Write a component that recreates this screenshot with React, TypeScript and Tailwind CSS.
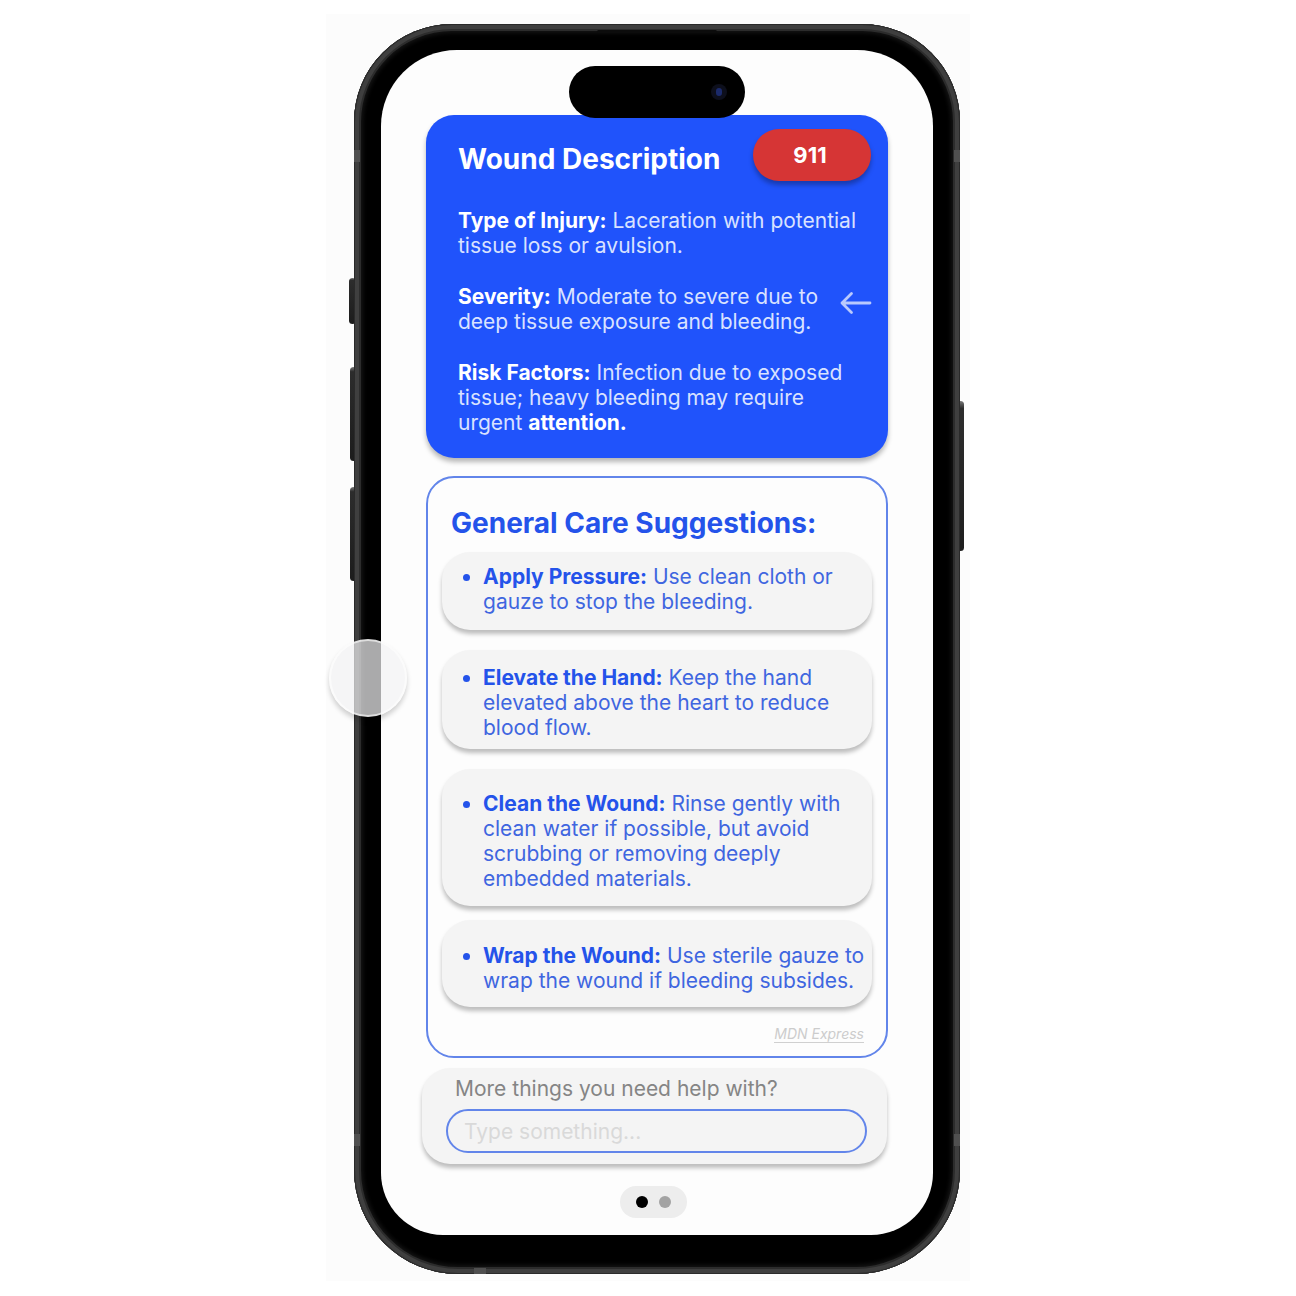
import React from "react";

const suggestions = [
  {
    title: "Apply Pressure:",
    lines: ["Use clean cloth or", "gauze to stop the bleeding."],
    box: "mt-3 pt-3 pb-4",
  },
  {
    title: "Elevate the Hand:",
    lines: ["Keep the hand", "elevated above the heart to reduce", "blood flow."],
    box: "mt-5 pt-[15px] pb-[9px]",
  },
  {
    title: "Clean the Wound:",
    lines: ["Rinse gently with", "clean water if possible, but avoid", "scrubbing or removing deeply", "embedded materials."],
    box: "mt-5 pt-[22px] pb-[15px]",
  },
  {
    title: "Wrap the Wound:",
    lines: ["Use sterile gauze to", "wrap the wound if bleeding subsides."],
    box: "mt-3.5 pt-[23px] pb-3.5",
  },
];

function Lines({ lines }: { lines: string[] }) {
  return (
    <>
      {lines.map((line, i) => (
        <React.Fragment key={line}>
          {i > 0 && <br />}
          {line}
        </React.Fragment>
      ))}
    </>
  );
}

function SideKey({ place }: { place: string }) {
  return <span aria-hidden="true" className={`absolute w-[7px] rounded-sm bg-gradient-to-b from-[#777] via-[#2c2c2c] via-5% to-[#1c1c1c] ${place}`} />;
}

function WoundCard() {
  return (
    <section className="relative rounded-[28px] bg-[#2053fb] pt-3.5 pr-[17px] pb-[23px] pl-8 text-white shadow-[0_4px_5px_rgba(0,0,0,0.28)]">
      <div className="flex items-center justify-between">
        <h1 className="pt-2 text-[28px] leading-[34px] font-bold">Wound Description</h1>
        <button type="button" className="h-[52px] w-[118px] rounded-full bg-[#d63535] pr-1 text-[22px] leading-[25px] font-bold shadow-[0_4px_5px_rgba(0,0,0,0.3)]">
          911
        </button>
      </div>
      <div className="mt-[27px] flex flex-col gap-[26px] whitespace-nowrap text-[21px] leading-[25px] font-normal text-[#d9e2ff]">
        <p>
          <strong className="font-bold text-white">Type of Injury:</strong> Laceration with potential
          <br />
          tissue loss or avulsion.
        </p>
        <p>
          <strong className="font-bold text-white">Severity:</strong> Moderate to severe due to
          <br />
          deep tissue exposure and bleeding.
        </p>
        <p>
          <strong className="font-bold text-white">Risk Factors:</strong> Infection due to exposed
          <br />
          tissue; heavy bleeding may require
          <br />
          urgent <strong className="font-bold text-white">attention.</strong>
        </p>
      </div>
      <button type="button" aria-label="Back" className="absolute top-[176px] right-4">
        <svg width="32" height="24" viewBox="0 0 32 24" fill="none" stroke="#b9c9fd" strokeWidth="2.8" strokeLinecap="round" strokeLinejoin="round">
          <path d="M30 12H2M11.500 2.500L2 12L11.500 21.500" />
        </svg>
      </button>
    </section>
  );
}

function CareCard() {
  return (
    <section className="mt-[18px] rounded-[28px] border-2 border-[#6285ea] px-3.5 pt-7 pb-3 text-[#3f66e0]">
      <h2 className="pl-[9px] text-[28px] leading-[34px] font-bold text-[#2453ea]">General Care Suggestions:</h2>
      <ul>
        {suggestions.map((s) => (
          <li key={s.title} className={`flex rounded-[28px] bg-[#f4f4f4] pl-[21px] shadow-[0_4px_4px_rgba(0,0,0,0.25)] ${s.box}`}>
            <span aria-hidden="true" className="mt-[10px] mr-[13px] size-[7px] shrink-0 rounded-full bg-[#2453ea]" />
            <p className="whitespace-nowrap text-[21px] leading-[25px] font-normal">
              <strong className="font-bold text-[#2453ea]">{s.title}</strong> <Lines lines={s.lines} />
            </p>
          </li>
        ))}
      </ul>
      <p className="mt-[17px] pr-2 text-right text-[14px] leading-5 font-normal italic text-[#cccccc]">
        <a href="#mdn-express" className="border-b border-[#d0d0d0]">MDN Express</a>
      </p>
    </section>
  );
}

function HelpCard() {
  return (
    <form className="mt-2.5 mr-px ml-[-4px] flex flex-col rounded-[28px] bg-[#f4f4f4] pt-2 pr-5 pb-[11px] pl-6 shadow-[0_4px_4px_rgba(0,0,0,0.25)]">
      <label htmlFor="help" className="pl-[9px] text-[21px] leading-[25px] font-normal text-[#858585]">
        More things you need help with?
      </label>
      <input
        id="help"
        type="text"
        placeholder="Type something..."
        className="mt-2 h-11 w-full rounded-full border-2 border-[#6285ea] bg-transparent px-4 text-[21px] font-normal outline-none placeholder:text-[#d9d9d9]"
      />
    </form>
  );
}

export default function App() {
  return (
    <main className="flex min-h-screen items-start justify-center bg-white py-3.5 font-['Inter',sans-serif]">
      <div className="relative w-full max-w-[644px] bg-[#fcfcfc] pt-2.5 pr-2.5 pb-[7px] pl-7">
        <div className="relative">
          <SideKey place="-left-[5px] top-[254px] h-[46px]" />
          <SideKey place="-left-1 top-[343px] h-[94px]" />
          <SideKey place="-left-1 top-[463px] h-[94px]" />
          <SideKey place="-right-1 top-[377px] h-[150px]" />
          <div className="relative rounded-t-[98px] rounded-b-[104px] bg-black px-[27px] pt-[26px] pb-[39px] shadow-[inset_0_0_0_1px_#2a2a2a,inset_0_0_0_5px_#3f3f3f,inset_0_0_0_7px_#2c2c2c,inset_0_0_4px_9px_#151515]">
            <span aria-hidden="true" className="absolute top-[6px] left-1/2 h-[3px] w-[120px] -translate-x-1/2 rounded-full bg-[#0c0c0c]" />
            <span aria-hidden="true" className="absolute top-[126px] left-0 h-3 w-1.5 bg-[#505050]" />
            <span aria-hidden="true" className="absolute top-[126px] right-0 h-3 w-1.5 bg-[#505050]" />
            <span aria-hidden="true" className="absolute bottom-[128px] left-0 h-3 w-1.5 bg-[#505050]" />
            <span aria-hidden="true" className="absolute right-0 bottom-[128px] h-3 w-1.5 bg-[#505050]" />
            <span aria-hidden="true" className="absolute bottom-0 left-[120px] h-1.5 w-3 bg-[#505050]" />
            <div className="relative rounded-t-[76px] rounded-b-[62px] bg-[#fdfdfd] px-[45px] pt-[65px] pb-[17px]">
              <div aria-hidden="true" className="absolute top-4 left-1/2 z-10 flex h-[52px] w-[176px] -translate-x-1/2 items-center justify-end rounded-full bg-black pr-[18px]">
                <span className="flex size-4 items-center justify-center rounded-full bg-[#0d0f1c]">
                  <span className="h-2 w-1.5 rounded-full bg-[#1b2a6b]" />
                </span>
              </div>
              <WoundCard />
              <CareCard />
              <HelpCard />
              <nav aria-label="Pages" className="mt-[22px] flex justify-center pr-[7px]">
                <div className="flex h-8 items-center gap-[11px] rounded-full bg-[#ededed] px-4">
                  <button type="button" aria-label="Page 1" className="size-3 rounded-full bg-black" />
                  <button type="button" aria-label="Page 2" className="size-3 rounded-full bg-[#a3a3a3]" />
                </div>
              </nav>
            </div>
          </div>
        </div>
        <div aria-hidden="true" className="absolute top-[625px] left-[3px] size-[78px] rounded-full border-2 border-white/60 bg-[#f2f2f4]/70 shadow-[0_4px_5px_rgba(0,0,0,0.18)]" />
      </div>
    </main>
  );
}
